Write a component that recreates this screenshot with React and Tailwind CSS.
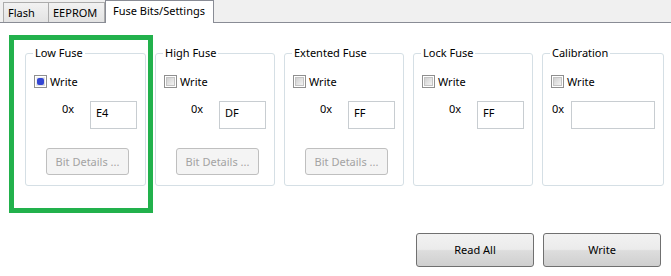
import React from "react";

function CheckBox({ checked }) {
  return (
    <div className="w-[13px] h-[13px] border border-[#8f8f8f] bg-white p-[1px] shrink-0">
      <div
        className={
          checked
            ? "w-full h-full bg-gradient-to-br from-[#f4f4f4] to-[#d9d9d9] flex items-center justify-center"
            : "w-full h-full bg-gradient-to-br from-[#d0d0d0] to-[#f3f3f3] border border-[#c4c4c4]"
        }
      >
        {checked && <div className="w-[7px] h-[7px] rounded-[2px] bg-[#3346d3]" />}
      </div>
    </div>
  );
}

function GroupBox({ title, checked, value, hasButton, calibration, width = "w-[120px]" }) {
  return (
    <div className={`relative ${width} h-[133px] border border-[#d5dfe5] rounded-[3px] pt-[21px] px-[8px] flex flex-col shrink-0`}>
      <span className="absolute left-[7px] top-[-9px] bg-white px-[2px] leading-[16px] whitespace-nowrap">{title}</span>
      <div className="flex items-center gap-[3px] h-[13px]">
        <CheckBox checked={checked} />
        <span className="leading-[16px]">Write</span>
      </div>
      <div className={`mt-[13px] flex items-start ${calibration ? "justify-between pl-[1px]" : "justify-end gap-[16px]"}`}>
        <span className="leading-[16px]">0x</span>
        <div className={`${calibration ? "w-[84px]" : "w-[47px]"} h-[28px] border border-[#c8cdd1] bg-white px-[5px] pt-[3px] leading-[16px]`}>
          {value}
        </div>
      </div>
      {hasButton && (
        <div className="mt-[19px] ml-[12px] w-[83px] h-[27px] border border-[#bfbfbf] rounded-[3px] bg-[#f4f4f4] text-[#a3a3a3] flex items-center justify-center leading-[16px] whitespace-nowrap">
          Bit Details ...
        </div>
      )}
    </div>
  );
}

function BigButton({ children }) {
  return (
    <div className="w-[118px] h-[34px] border border-[#707070] rounded-[3px] bg-[linear-gradient(to_bottom,#f2f2f2_0%,#ebebeb_48%,#dddddd_52%,#cfcfcf_100%)] flex items-center justify-center leading-[16px] text-black">
      {children}
    </div>
  );
}

export default function App() {
  return (
    <div className="relative w-[671px] h-[276px] bg-white text-[11px] text-black font-['Noto_Sans',sans-serif] overflow-hidden">
      <div className="relative h-[23px] bg-[#f0f0f0] border-b border-[#898c95] flex items-end pl-[3px]">
        <div className="h-[20px] w-[46px] border border-b-0 border-[#acacac] bg-gradient-to-b from-[#f2f2f2] to-[#e3e3e3] pl-[4px] leading-[19px] whitespace-nowrap">
          Flash
        </div>
        <div className="h-[20px] w-[56px] border border-b-0 border-l-0 border-[#acacac] bg-gradient-to-b from-[#f2f2f2] to-[#e3e3e3] pl-[4px] leading-[19px] whitespace-nowrap">
          EEPROM
        </div>
        <div className="h-[23px] w-[109px] border border-b-0 border-[#898c95] bg-white pl-[7px] leading-[20px] mb-[-1px] whitespace-nowrap">
          Fuse Bits/Settings
        </div>
      </div>

      <div className="pl-[25px] pt-[30px] flex gap-[9px]">
        <GroupBox title="Low Fuse" checked value="E4" hasButton width="w-[121px]" />
        <GroupBox title="High Fuse" value="DF" hasButton />
        <GroupBox title="Extented Fuse" value="FF" hasButton />
        <GroupBox title="Lock Fuse" value="FF" />
        <GroupBox title="Calibration" value="" calibration width="w-[122px]" />
      </div>

      <div className="mt-[47px] flex justify-end gap-[9px] pr-[10px]">
        <BigButton>Read All</BigButton>
        <BigButton>Write</BigButton>
      </div>

      <div className="absolute left-[9px] top-[35px] w-[144px] h-[178px] border-[5px] border-[#22b14c]" />
    </div>
  );
}
